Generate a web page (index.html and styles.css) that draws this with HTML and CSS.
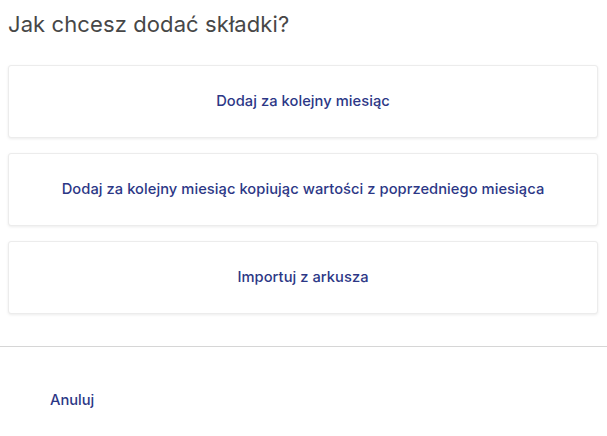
FILE: index.html
```html
<!DOCTYPE html>
<html lang="pl">
<head>
<meta charset="utf-8">
<link rel="stylesheet" href="styles.css">
</head>
<body>
<div class="dialog">
  <div class="content">
    <h1 class="title">Jak chcesz dodać składki?</h1>
    <div class="options">
      <button class="option">Dodaj za kolejny miesiąc</button>
      <button class="option">Dodaj za kolejny miesiąc kopiując wartości z poprzedniego miesiąca</button>
      <button class="option">Importuj z arkusza</button>
    </div>
  </div>
  <div class="actions">
    <button class="cancel">Anuluj</button>
  </div>
</div>
</body>
</html>
```
FILE: styles.css
```css
html, body {
  margin: 0;
  background: #fff;
}
body {
  font-family: Inter, "Noto Sans", sans-serif;
}
.content {
  padding: 8px 8px 32px 8px;
}
.title {
  margin: 0;
  font-size: 22px;
  font-weight: 400;
  line-height: 32px;
  color: #474747;
  letter-spacing: 0.1px;
}
.options {
  display: flex;
  flex-direction: column;
  gap: 15px;
  margin-top: 25px;
  margin-right: 1px;
}
.option {
  height: 73px;
  display: flex;
  align-items: center;
  justify-content: center;
  background: #fff;
  border: 1px solid #ececec;
  border-radius: 3px;
  box-shadow: 0 1px 3px rgba(0, 0, 0, 0.08);
  font-family: Inter, "Noto Sans", sans-serif;
  font-size: 14.7px;
  font-weight: 500;
  letter-spacing: 0.05px;
  color: #2c3786;
  cursor: pointer;
  padding: 0 16px 2px;
}
.actions {
  border-top: 1px solid #d6d6d6;
  padding: 36px 0 0 42px;
}
.cancel {
  background: none;
  border: none;
  padding: 8px;
  font-family: Inter, "Noto Sans", sans-serif;
  font-size: 14.7px;
  font-weight: 500;
  color: #2c3786;
  cursor: pointer;
}
```
